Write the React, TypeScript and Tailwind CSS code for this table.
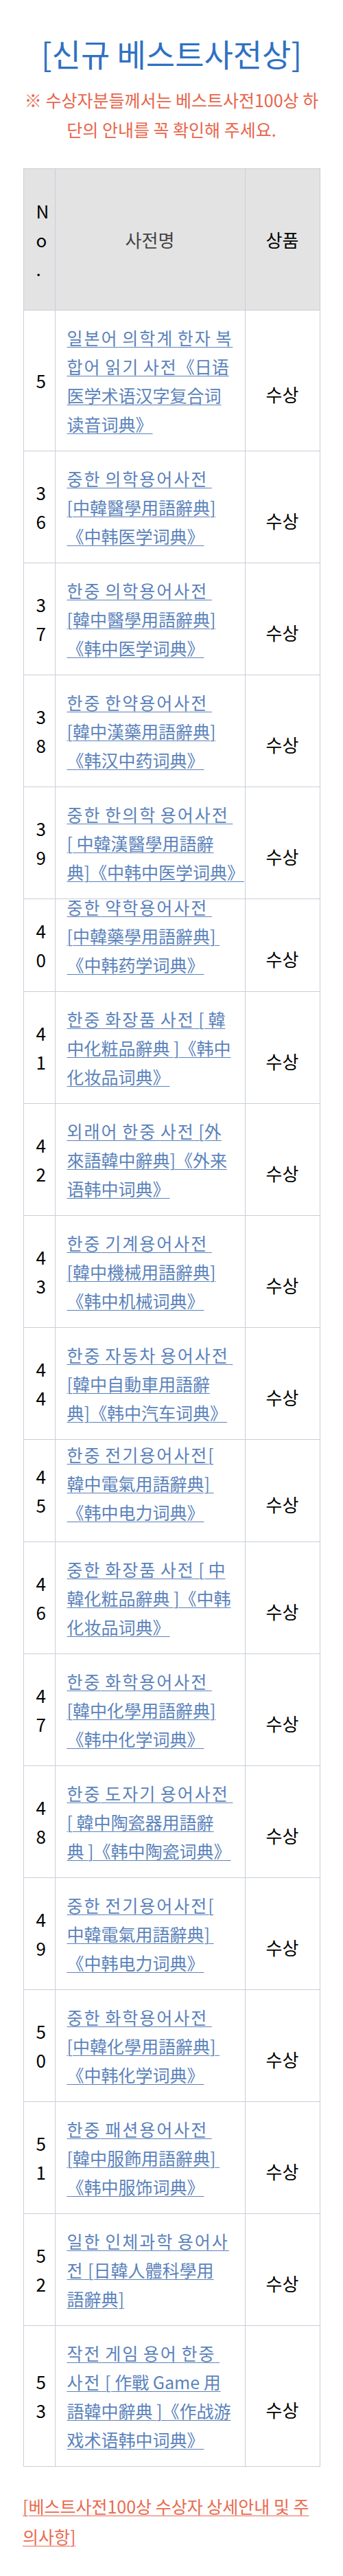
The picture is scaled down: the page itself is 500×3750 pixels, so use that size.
import React from 'react';

type Row = { no: string; lines: string[]; seam?: 'cut' | 'short' };

const NB = '\u00a0';

const ROWS: Row[] = [
  { no: '5', lines: ['일본어 의학계 한자 복', '합어 읽기 사전《日语', '医学术语汉字复合词', '读音词典》'] },
  { no: '36', lines: [`중한 의학용어사전${NB}`, '[中韓醫學用語辭典]', '《中韩医学词典》'] },
  { no: '37', lines: [`한중 의학용어사전${NB}`, '[韓中醫學用語辭典]', '《韩中医学词典》'] },
  { no: '38', lines: [`한중 한약용어사전${NB}`, '[韓中漢藥用語辭典]', '《韩汉中药词典》'] },
  { no: '39', lines: [`중한 한의학 용어사전${NB}`, '[ 中韓漢醫學用語辭', '典]《中韩中医学词典》'] },
  { no: '40', lines: [`중한 약학용어사전${NB}`, `[中韓藥學用語辭典]${NB}`, '《中韩药学词典》'], seam: 'cut' },
  { no: '41', lines: ['한중 화장품 사전 [ 韓', '中化粧品辭典 ]《韩中', '化妆品词典》'] },
  { no: '42', lines: ['외래어 한중 사전 [外', '來語韓中辭典]《外来', '语韩中词典》'] },
  { no: '43', lines: [`한중 기계용어사전${NB}`, '[韓中機械用語辭典]', '《韩中机械词典》'] },
  { no: '44', lines: [`한중 자동차 용어사전${NB}`, '[韓中自動車用語辭', '典]《韩中汽车词典》'] },
  { no: '45', lines: ['한중 전기용어사전[', `韓中電氣用語辭典]${NB}`, '《韩中电力词典》'], seam: 'short' },
  { no: '46', lines: ['중한 화장품 사전 [ 中', '韓化粧品辭典 ]《中韩', '化妆品词典》'] },
  { no: '47', lines: [`한중 화학용어사전${NB}`, '[韓中化學用語辭典]', '《韩中化学词典》'] },
  { no: '48', lines: [`한중 도자기 용어사전${NB}`, '[ 韓中陶瓷器用語辭', '典 ]《韩中陶瓷词典》'] },
  { no: '49', lines: ['중한 전기용어사전[', `中韓電氣用語辭典]${NB}`, '《中韩电力词典》'] },
  { no: '50', lines: [`중한 화학용어사전${NB}`, `[中韓化學用語辭典]${NB}`, '《中韩化学词典》'] },
  { no: '51', lines: [`한중 패션용어사전${NB}`, `[韓中服飾用語辭典]${NB}`, '《韩中服饰词典》'] },
  { no: '52', lines: ['일한 인체과학 용어사', '전 [日韓人體科學用', '語辭典]'] },
  { no: '53', lines: [`작전 게임 용어 한중${NB}`, '사전 [ 作戰 Game 用', '語韓中辭典 ]《作战游', '戏术语韩中词典》'] },
];

// hangul in the source font runs a little wider than Noto's, so space it out
function Runs({ text }: { text: string }) {
  const parts = text.split(/([\uAC00-\uD7A3]+)/);
  return (
    <>
      {parts.map((p, i) =>
        /[\uAC00-\uD7A3]/.test(p) ? (
          <span key={i} className="tracking-[2px]">
            {p}
          </span>
        ) : (
          <React.Fragment key={i}>{p}</React.Fragment>
        ),
      )}
    </>
  );
}

function Stack({ text }: { text: string }) {
  return (
    <>
      {text.split('').map((ch, i) => (
        <span key={i} className="block">
          {ch}
        </span>
      ))}
    </>
  );
}

export default function App() {
  return (
    <div className="w-[500px] min-h-[3750px] bg-white font-['Noto_Sans_CJK_KR','Noto_Sans',sans-serif]">
      {/* heading */}
      <h1 className="pt-[47px] text-center text-[46px] leading-[60px] font-normal text-[#2f71c3]">
        [신규 베스트사전상]
      </h1>
      <p className="mt-[17px] text-center text-[25px] leading-[43px] text-[#e9654b]">
        ※ 수상자분들께서는 베스트사전100상 하
        <br />
        단의 안내를 꼭 확인해 주세요.
      </p>

      {/* award table */}
      <table className="mt-[35px] mx-auto w-[432px] table-fixed border-collapse text-[26px] leading-[42px] text-black">
        <colgroup>
          <col className="w-[46px]" />
          <col className="w-[277px]" />
          <col className="w-[109px]" />
        </colgroup>
        <thead>
          <tr className="h-[206px] bg-[#e3e3e3]">
            <th className="border border-[#c9ced8] pl-[18px] text-left align-middle font-normal">
              <Stack text="No." />
            </th>
            <th className="border border-[#c9ced8] text-center align-middle font-normal text-[#444]">사전명</th>
            <th className="border border-[#c9ced8] text-center align-middle font-normal">상품</th>
          </tr>
        </thead>
        <tbody>
          {ROWS.map((row) => (
            <tr key={row.no}>
              <td className="border border-[#c9ced8] pl-[18px] text-left align-middle">
                <Stack text={row.no} />
              </td>
              <td
                className={
                  row.seam === 'cut'
                    ? 'border border-[#c9ced8] pl-[17px] pr-[8px] pt-0 pb-[18px] align-top'
                    : row.seam === 'short'
                      ? 'border border-[#c9ced8] pl-[17px] pr-[8px] pt-0 pb-[22px] align-top'
                      : 'border border-[#c9ced8] pl-[17px] pr-[8px] py-[18px] align-top'
                }
              >
                <a
                  href="#"
                  className={
                    row.seam === 'cut'
                      ? 'block -mt-[10px] text-[25px] text-[#5b83bb]'
                      : 'block text-[25px] text-[#5b83bb]'
                  }
                >
                  {row.lines.map((line, i) => (
                    <span key={i} className="block whitespace-nowrap">
                      <span className="underline decoration-1 underline-offset-[3px]">
                        <Runs text={line} />
                      </span>
                    </span>
                  ))}
                </a>
              </td>
              <td className="border border-[#c9ced8] pt-[40px] text-center align-middle">수상</td>
            </tr>
          ))}
        </tbody>
      </table>

      {/* footer link */}
      <p className="mt-[35px] pl-[33px] text-[25px] leading-[44px]">
        <a href="#" className="text-[#ea6a4f] underline decoration-1 underline-offset-[3px]">
          [베스트사전100상 수상자 상세안내 및 주
          <br />
          의사항]
        </a>
      </p>
    </div>
  );
}
